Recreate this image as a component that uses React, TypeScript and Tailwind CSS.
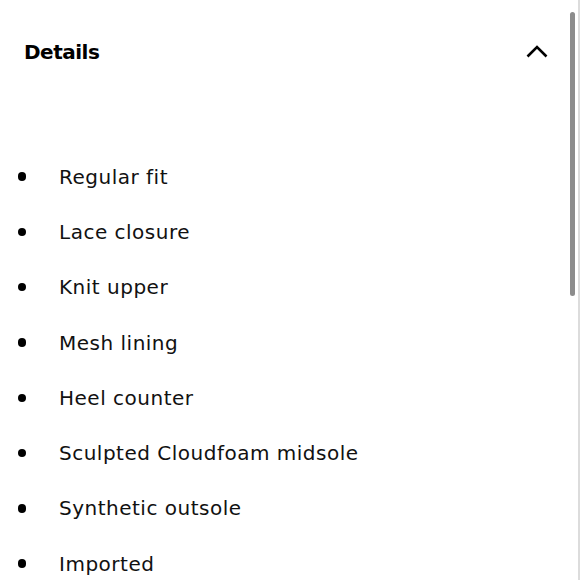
// Product details accordion (expanded)

import React from 'react';

const details = [
  'Regular fit',
  'Lace closure',
  'Knit upper',
  'Mesh lining',
  'Heel counter',
  'Sculpted Cloudfoam midsole',
  'Synthetic outsole',
  'Imported',
];

export default function App() {
  return (
    <div
      className="relative w-[580px] h-[580px] overflow-hidden bg-white text-black border-r-2 border-[#dcdcdc]"
      style={{ fontFamily: '"DejaVu Sans", "Liberation Sans", sans-serif' }}
    >
      <button
        type="button"
        className="flex w-full items-center justify-between pl-6 pr-[30px] pt-[38px] pb-[35px]"
      >
        <span className="text-[20px] leading-[28px] font-bold tracking-[-0.5px]">Details</span>
        <svg width="22" height="13" viewBox="0 0 22 13" fill="none" className="mt-[-2px]">
          <path d="M1.5 11.5L11 2L20.5 11.5" stroke="black" strokeWidth="2.6" />
        </svg>
      </button>

      <ul className="mt-[48px] flex flex-col">
        {details.map((item) => (
          <li key={item} className="flex items-center h-[55.3px] pl-[17.5px]">
            <span className="w-[8.5px] h-[8.5px] rounded-full bg-black shrink-0" />
            <span className="ml-[33px] text-[20px] leading-[28px] tracking-[0.5px] text-[#111]">
              {item}
            </span>
          </li>
        ))}
      </ul>

      {/* overlay scrollbar thumb */}
      <div className="absolute right-[3px] top-[12px] w-[5px] h-[284px] rounded-full bg-[#8c8c8c]" />
    </div>
  );
}
